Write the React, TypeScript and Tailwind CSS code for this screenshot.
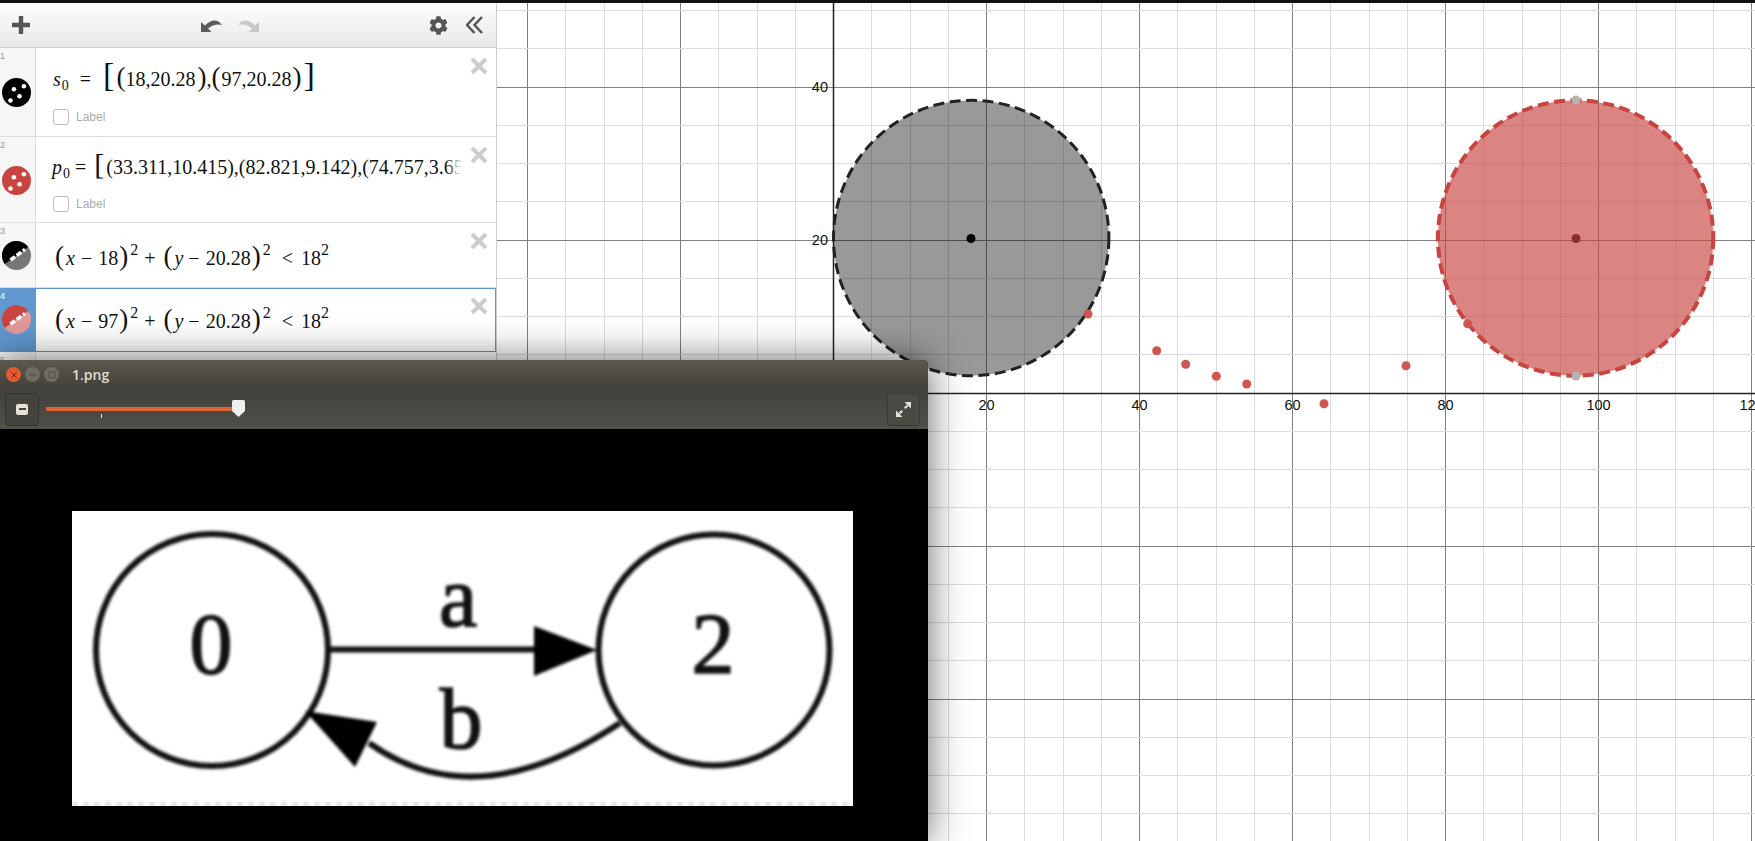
import { ReactNode } from "react";
import { FaCog } from "react-icons/fa";
import { Minus, Square, X } from "lucide-react";

const UNIT = 7.65;
const ORIGIN_X = 833.5;
const ORIGIN_Y = 393;

const minorX = Array.from({ length: 36 }, (_, i) => i - 9);
const minorY = Array.from({ length: 24 }, (_, i) => i - 11);
const tickLabels = [20, 40, 60, 80, 100, 120];

const redPoints = [
  [1088, 314],
  [1156.7, 350.7],
  [1185.7, 364.3],
  [1216.3, 376.3],
  [1246.7, 384],
  [1324, 403.7],
  [1406, 365.7],
  [1467.7, 323.7],
];

function snap(v: number) {
  return Math.round(v - 0.5) + 0.5;
}

function PointsIcon({ color }: { color: string }) {
  return (
    <svg width="29" height="29" viewBox="0 0 29 29">
      <circle cx="14.5" cy="14.5" r="14.5" fill={color} />
      <circle cx="11.9" cy="11.2" r="2.3" fill="#fff" />
      <circle cx="21.9" cy="8.2" r="2.3" fill="#fff" />
      <circle cx="17.5" cy="18.2" r="2.3" fill="#fff" />
      <circle cx="8.5" cy="22.5" r="2.3" fill="#fff" />
    </svg>
  );
}

function RegionIcon({ dark, light }: { dark: string; light: string }) {
  return (
    <svg width="29" height="29" viewBox="0 0 29 29">
      <circle cx="14.5" cy="14.5" r="14.5" fill={light} />
      <path d="M2.8 23.1A14.5 14.5 0 0 1 26.2 5.9Z" fill={dark} />
      <path d="M8.5 19L23 8.4" stroke="#fff" strokeWidth="3.6" strokeDasharray="5.5 2.2" fill="none" />
    </svg>
  );
}

function LabelCheck() {
  return (
    <div className="flex items-center gap-[7px]">
      <div className="w-[16px] h-[16px] rounded-[3px] border border-[#bbb] bg-white" />
      <span className="text-[12px] text-[#aaa]">Label</span>
    </div>
  );
}

interface RowProps {
  n: number;
  icon: ReactNode;
  height: string;
  active?: boolean;
  iconMargin: string;
  children: ReactNode;
}

function Row({ n, icon, height, active, iconMargin, children }: RowProps) {
  return (
    <div className={`relative flex border-b ${height} ${active ? "border-[#5f97cd]" : "border-[#ddd]"}`}>
      <div
        className={`relative w-[36px] shrink-0 flex flex-col pl-[2px] ${
          active ? "bg-[#6198cf]" : "bg-[#f6f6f6] border-r border-[#ddd]"
        }`}
      >
        <span className={`absolute left-0 top-[2px] text-[9px] ${active ? "text-white" : "text-[#999]"}`}>{n}</span>
        <div className={iconMargin}>{icon}</div>
      </div>
      <div
        className={`flex-1 min-w-0 overflow-hidden bg-white ${active ? "border-t border-r border-[#5f97cd]" : ""}`}
      >
        {children}
      </div>
      <svg className="absolute right-[8px] top-[9px]" width="18" height="18" viewBox="0 0 18 18">
        <path d="M2 2L16 16M16 2L2 16" stroke="#ccc" strokeWidth="4" />
      </svg>
    </div>
  );
}

function CircleEquation({ center, top }: { center: string; top: string }) {
  return (
    <div
      className={`flex items-baseline pl-[19px] ${top} text-[20px] leading-[30px] text-[#111] font-['Liberation_Serif'] whitespace-nowrap`}
    >
      <span className="text-[27px] font-light">(</span>
      <i className="ml-[2px]">x</i>
      <span className="ml-[6px]">−</span>
      <span className="ml-[6px]">{center}</span>
      <span className="text-[27px] font-light ml-[1px]">)</span>
      <span className="text-[16px] relative bottom-[10px] ml-[2px]">2</span>
      <span className="ml-[6px]">+</span>
      <span className="text-[27px] font-light ml-[8px]">(</span>
      <i className="ml-[2px]">y</i>
      <span className="ml-[5px]">−</span>
      <span className="ml-[6px]">20.28</span>
      <span className="text-[27px] font-light ml-[1px]">)</span>
      <span className="text-[16px] relative bottom-[10px] ml-[2px]">2</span>
      <span className="ml-[11px]">&lt;</span>
      <span className="ml-[8px]">18</span>
      <span className="text-[16px] relative bottom-[10px]">2</span>
    </div>
  );
}

function ExpressionPanel() {
  return (
    <div className="w-[497px] shrink-0 flex flex-col border-r border-[#ccc] bg-white">
      <div className="h-[45px] shrink-0 flex items-center border-b border-[#ccc] bg-gradient-to-b from-[#fdfdfd] to-[#e9e9e9]">
        <svg className="ml-[12px]" width="18" height="18" viewBox="0 0 18 18">
          <path d="M9 0V18M0 9H18" stroke="#555" strokeWidth="4.4" />
        </svg>
        <svg className="ml-[171px]" width="22" height="16" viewBox="201 16 22 16">
          <path d="M201 21V31H211.5L208 27.5Q215 22 222 24Q215 15 205 24.5Z" fill="#5c5c5c" />
        </svg>
        <svg className="ml-[14px]" width="22" height="16" viewBox="201 16 22 16">
          <path d="M223 21V31H212.5L216 27.5Q209 22 202 24Q209 15 219 24.5Z" fill="#c8c8c8" />
        </svg>
        <FaCog className="ml-[170px]" size={19} color="#555" />
        <svg className="ml-[18px]" width="17" height="18" viewBox="0 0 17 18">
          <path d="M8.5 1L1 9L8.5 17M16 1L8.5 9L16 17" stroke="#555" strokeWidth="2.5" fill="none" />
        </svg>
      </div>

      <Row n={1} height="h-[89px]" iconMargin="mt-[30px]" icon={<PointsIcon color="#000" />}>
        <div className="flex items-baseline pl-[17px] pt-[10px] h-[50px] text-[20px] leading-[34px] text-[#111] font-['Liberation_Serif'] whitespace-nowrap">
          <i>s</i>
          <sub className="text-[14px] ml-[1px]">0</sub>
          <span className="ml-[11px]">=</span>
          <span className="text-[34px] font-light ml-[12px]">[</span>
          <span className="text-[27px] ml-[2px]">(</span>
          <span>18,20.28</span>
          <span className="text-[27px] ml-[2px]">)</span>
          <span>,</span>
          <span className="text-[27px]">(</span>
          <span className="ml-[1px]">97,20.28</span>
          <span className="text-[27px] ml-[1px]">)</span>
          <span className="text-[34px] font-light ml-[2px]">]</span>
        </div>
        <div className="pl-[17px] pt-[10px]">
          <LabelCheck />
        </div>
      </Row>

      <Row n={2} height="h-[86px]" iconMargin="mt-[29px]" icon={<PointsIcon color="#c74440" />}>
        <div className="relative w-[426px] overflow-hidden flex items-baseline pl-[16px] pt-[10px] h-[48px] text-[20px] leading-[34px] text-[#111] font-['Liberation_Serif'] whitespace-nowrap">
          <i>p</i>
          <sub className="text-[14px] ml-[1px]">0</sub>
          <span className="ml-[5px]">=</span>
          <span className="text-[30px] font-light ml-[8px]">[</span>
          <span className="ml-[2px]">(33.311,10.415),(82.821,9.142),(74.757,3.65</span>
          <div className="absolute right-0 top-0 bottom-0 w-[16px] bg-gradient-to-r from-transparent to-white" />
        </div>
        <div className="pl-[17px] pt-[10px]">
          <LabelCheck />
        </div>
      </Row>

      <Row n={3} height="h-[65px]" iconMargin="mt-[18px]" icon={<RegionIcon dark="#000" light="#777" />}>
        <CircleEquation center="18" top="pt-[18px]" />
      </Row>

      <Row n={4} height="h-[64px]" active iconMargin="mt-[17px]" icon={<RegionIcon dark="#c74440" light="#e09a97" />}>
        <CircleEquation center="97" top="pt-[15px]" />
      </Row>

      <div className="flex-1 flex">
        <div className="w-[36px] bg-[#f6f6f6] border-r border-[#ddd] text-[9px] text-[#999] pt-[2px]">5</div>
      </div>
    </div>
  );
}

function GraphCanvas() {
  return (
    <svg className="flex-1 min-w-0 h-full block" viewBox="497 3 1258 838">
      {minorX.map((i) => (
        <line
          key={`vm${i}`}
          x1={snap(ORIGIN_X + i * 38.25)}
          x2={snap(ORIGIN_X + i * 38.25)}
          y1="0"
          y2="841"
          stroke={i % 4 === 0 ? "#808080" : "#dcdcdc"}
        />
      ))}
      {minorY.map((i) => (
        <line
          key={`hm${i}`}
          x1="497"
          x2="1755"
          y1={snap(ORIGIN_Y + i * 38.25)}
          y2={snap(ORIGIN_Y + i * 38.25)}
          stroke={i % 4 === 0 ? "#808080" : "#dcdcdc"}
        />
      ))}

      <circle cx="971.2" cy="238" r="137.7" fill="#000" fillOpacity="0.4" />
      <circle cx="1575.6" cy="238" r="137.7" fill="#c74440" fillOpacity="0.65" />

      <line x1="833.5" x2="833.5" y1="0" y2="841" stroke="#222" strokeWidth="1.5" />
      <line x1="497" x2="1755" y1="393.5" y2="393.5" stroke="#222" strokeWidth="1.5" />

      <circle cx="971.2" cy="238" r="137.7" fill="none" stroke="#222" strokeWidth="3" strokeDasharray="11 5.5" />
      <circle cx="1575.6" cy="238" r="137.7" fill="none" stroke="#c74440" strokeWidth="4" strokeDasharray="11 5.5" />

      <circle cx="971" cy="238.5" r="4.5" fill="#000" />
      <circle cx="1576" cy="238.5" r="4.5" fill="#8a2d2a" />
      <circle cx="1576" cy="100" r="4.5" fill="#b5b2b2" />
      <circle cx="1576" cy="376" r="4.5" fill="#b5b2b2" />
      {redPoints.map(([x, y]) => (
        <circle key={x} cx={x} cy={y} r="4.5" fill="#d05450" />
      ))}

      <g fontFamily="Liberation Sans, sans-serif" fontSize="14.5" fill="#111">
        <text x="828" y="92" textAnchor="end">40</text>
        <text x="828" y="245" textAnchor="end">20</text>
        {tickLabels.map((t) => (
          <text key={t} x={ORIGIN_X + t * UNIT} y="410" textAnchor="middle">
            {t}
          </text>
        ))}
      </g>
    </svg>
  );
}

function ImageWindow() {
  return (
    <div className="absolute left-0 top-[360px] z-10 w-[928px] h-[481px] flex flex-col rounded-tr-[5px] overflow-visible bg-black shadow-[0_0_38px_rgba(0,0,0,0.6)]">
      <div className="h-[29px] shrink-0 flex items-center pl-[6px] rounded-tr-[5px] bg-gradient-to-b from-[#5b584f] to-[#42413a]">
        <div className="w-[15px] h-[15px] rounded-full bg-[#e9582a] flex items-center justify-center">
          <X size={10} color="#4a2010" strokeWidth={2} />
        </div>
        <div className="ml-[4px] w-[15px] h-[15px] rounded-full bg-[#6f6c64] flex items-center justify-center">
          <Minus size={10} color="#3f3d38" strokeWidth={2} />
        </div>
        <div className="ml-[4px] w-[15px] h-[15px] rounded-full bg-[#6f6c64] flex items-center justify-center">
          <Square size={8} color="#3f3d38" strokeWidth={2} />
        </div>
        <span className="ml-[13px] text-[14px] font-semibold text-[#dfdbd2] font-['Open_Sans']">1.png</span>
      </div>

      <div className="h-[40px] shrink-0 flex items-center pl-[5px] pr-[8px] bg-gradient-to-b from-[#42413b] to-[#504f49]">
        <div className="w-[34px] h-[33px] rounded-[4px] border border-[#33322d] bg-[#44433d] flex items-center justify-center">
          <div className="w-[12px] h-[11px] rounded-[2px] bg-[#e6e2da] flex items-center justify-center">
            <div className="w-[7px] h-[2px] bg-[#47463f]" />
          </div>
        </div>
        <div className="relative ml-[7px] w-[187px] h-[4px] bg-[#e0652f] rounded-[1px]">
          <div className="absolute left-[55px] top-[7px] w-[1px] h-[4px] bg-[#dfdbd2]" />
          <svg className="absolute left-[186px] top-[-7px]" width="13" height="17" viewBox="0 0 13 17">
            <path d="M1.5 0H11.5Q13 0 13 1.5V11L6.5 17L0 11V1.5Q0 0 1.5 0Z" fill="#f2f0ec" />
          </svg>
        </div>
        <div className="ml-auto w-[33px] h-[33px] rounded-[4px] border border-[#3a3934] bg-[#4a4943] flex items-center justify-center">
          <svg width="15" height="15" viewBox="0 0 15 15">
            <path d="M8.5 0H15V6.5Z" fill="#e6e2da" />
            <path d="M6.5 15H0V8.5Z" fill="#e6e2da" />
            <path d="M11.5 3.5L8.8 6.2M3.5 11.5L6.2 8.8" stroke="#e6e2da" strokeWidth="2.2" />
          </svg>
        </div>
      </div>

      <div className="flex-1 pl-[72px] pt-[82px] bg-black overflow-hidden">
        <div className="w-[781px] h-[295px] bg-white overflow-hidden">
          <svg className="w-full h-full blur-[1.4px]" viewBox="72 511 781 295">
            <circle cx="212" cy="650" r="116" fill="none" stroke="#111" strokeWidth="6" />
            <circle cx="714" cy="650" r="115.5" fill="none" stroke="#111" strokeWidth="6" />
            <line x1="327" x2="540" y1="649.5" y2="649.5" stroke="#111" strokeWidth="6" />
            <path d="M534 626L597 650L534 676Z" fill="#000" />
            <path d="M620 723Q476 819 369 743" fill="none" stroke="#111" strokeWidth="6" />
            <path d="M305 711L377 722L355 767Z" fill="#000" />
            <line x1="72" x2="853" y1="804" y2="804" stroke="#dcdcdc" strokeWidth="4" strokeDasharray="6 5" />
            <g
              fontFamily="Liberation Serif, serif"
              fontSize="86"
              fill="#111"
              stroke="#111"
              strokeWidth="1.6"
              textAnchor="middle"
            >
              <text x="211" y="673">0</text>
              <text x="713" y="673">2</text>
              <text x="458" y="626">a</text>
              <text x="461" y="748">b</text>
            </g>
          </svg>
        </div>
      </div>
    </div>
  );
}

export default function App() {
  return (
    <div className="relative w-full h-[841px] overflow-hidden flex flex-col bg-white font-['Liberation_Sans',sans-serif]">
      <div className="h-[3px] shrink-0 bg-[#111]" />
      <div className="flex-1 min-h-0 flex">
        <ExpressionPanel />
        <GraphCanvas />
      </div>
      <ImageWindow />
    </div>
  );
}
